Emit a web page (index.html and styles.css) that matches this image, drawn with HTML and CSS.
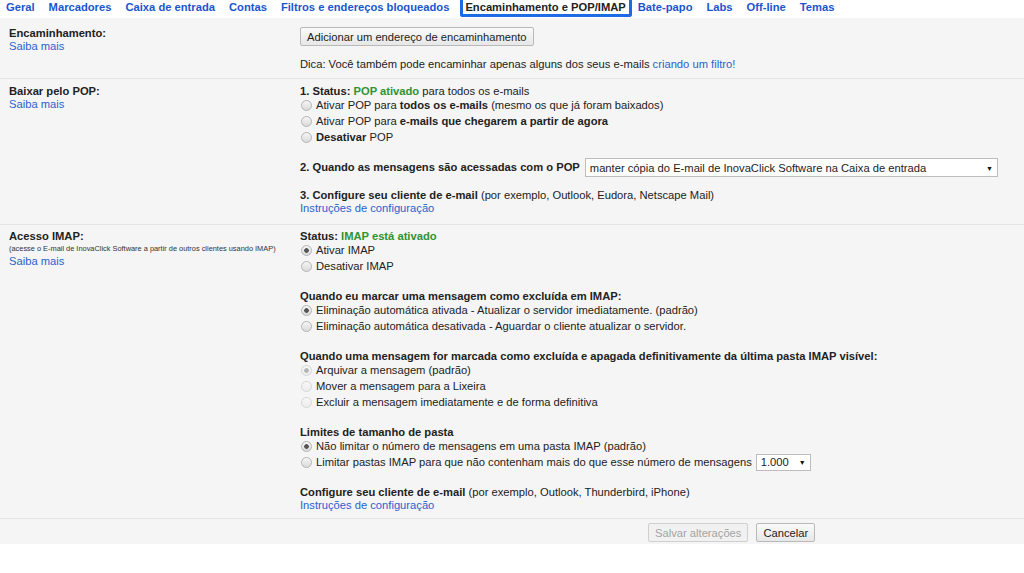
FILE: index.html
```html
<!DOCTYPE html>
<html lang="pt-BR">
<head>
    <meta charset="UTF-8">
    <meta name="viewport" content="width=device-width, initial-scale=1.0">
    <title>Configurações - Encaminhamento e POP/IMAP</title>
    <link rel="stylesheet" href="styles.css">
</head>
<body>
    <div class="tabs">
        <a class="tab" href="#">Geral</a>
        <a class="tab" href="#">Marcadores</a>
        <a class="tab" href="#">Caixa de entrada</a>
        <a class="tab" href="#">Contas</a>
        <a class="tab" href="#">Filtros e endereços bloqueados</a>
        <span class="tab tab-active">Encaminhamento e POP/IMAP</span>
        <a class="tab" href="#">Bate-papo</a>
        <a class="tab" href="#">Labs</a>
        <a class="tab" href="#">Off-line</a>
        <a class="tab" href="#">Temas</a>
    </div>

    <div class="settings">
        <div class="row row-forward">
            <div class="label">
                <b>Encaminhamento:</b>
                <a class="link" href="#">Saiba mais</a>
            </div>
            <div class="content">
                <div><button class="btn">Adicionar um endereço de encaminhamento</button></div>
                <div class="tip">Dica: Você também pode encaminhar apenas alguns dos seus e-mails <a class="link" href="#">criando um filtro!</a></div>
            </div>
        </div>

        <div class="row row-pop">
            <div class="label">
                <b>Baixar pelo POP:</b>
                <a class="link" href="#">Saiba mais</a>
            </div>
            <div class="content">
                <div class="line"><b>1. Status: <span class="on">POP ativado</span></b> para todos os e-mails</div>
                <label class="option"><input class="radio" type="radio" name="pop"><span>Ativar POP para <b>todos os e-mails</b> (mesmo os que já foram baixados)</span></label>
                <label class="option"><input class="radio" type="radio" name="pop"><span>Ativar POP para <b>e-mails que chegarem a partir de agora</b></span></label>
                <label class="option"><input class="radio" type="radio" name="pop"><span><b>Desativar</b> POP</span></label>

                <div class="line line-select">
                    <b>2. Quando as mensagens são acessadas com o POP</b>
                    <span class="select-wrap select-wide">
                        <select class="select">
                            <option>manter cópia do E-mail de InovaClick Software na Caixa de entrada</option>
                        </select>
                    </span>
                </div>

                <div class="line line-gap"><b>3. Configure seu cliente de e-mail</b> (por exemplo, Outlook, Eudora, Netscape Mail)</div>
                <a class="link" href="#">Instruções de configuração</a>
            </div>
        </div>

        <div class="row row-imap">
            <div class="label">
                <b>Acesso IMAP:</b>
                <span class="small">(acesse o E-mail de InovaClick Software a partir de outros clientes usando IMAP)</span>
                <a class="link" href="#">Saiba mais</a>
            </div>
            <div class="content">
                <div class="group">
                    <div class="line"><b>Status: <span class="on">IMAP está ativado</span></b></div>
                    <label class="option"><input class="radio" type="radio" name="imap" checked><span>Ativar IMAP</span></label>
                    <label class="option"><input class="radio" type="radio" name="imap"><span>Desativar IMAP</span></label>
                </div>

                <div class="group">
                    <div class="line"><b>Quando eu marcar uma mensagem como excluída em IMAP:</b></div>
                    <label class="option"><input class="radio" type="radio" name="expunge" checked><span>Eliminação automática ativada - Atualizar o servidor imediatamente. (padrão)</span></label>
                    <label class="option"><input class="radio" type="radio" name="expunge"><span>Eliminação automática desativada - Aguardar o cliente atualizar o servidor.</span></label>
                </div>

                <div class="group">
                    <div class="line"><b>Quando uma mensagem for marcada como excluída e apagada definitivamente da última pasta IMAP visível:</b></div>
                    <label class="option"><input class="radio" type="radio" name="deleted" checked disabled><span>Arquivar a mensagem (padrão)</span></label>
                    <label class="option"><input class="radio" type="radio" name="deleted" disabled><span>Mover a mensagem para a Lixeira</span></label>
                    <label class="option"><input class="radio" type="radio" name="deleted" disabled><span>Excluir a mensagem imediatamente e de forma definitiva</span></label>
                </div>

                <div class="group">
                    <div class="line"><b>Limites de tamanho de pasta</b></div>
                    <label class="option"><input class="radio" type="radio" name="limit" checked><span>Não limitar o número de mensagens em uma pasta IMAP (padrão)</span></label>
                    <label class="option"><input class="radio" type="radio" name="limit"><span>Limitar pastas IMAP para que não contenham mais do que esse número de mensagens</span>
                        <span class="select-wrap select-small">
                            <select class="select">
                                <option>1.000</option>
                            </select>
                        </span>
                    </label>
                </div>

                <div class="line"><b>Configure seu cliente de e-mail</b> (por exemplo, Outlook, Thunderbird, iPhone)</div>
                <a class="link" href="#">Instruções de configuração</a>
            </div>
        </div>

        <div class="actions">
            <button class="btn" disabled>Salvar alterações</button>
            <button class="btn">Cancelar</button>
        </div>
    </div>
</body>
</html>
```

FILE: styles.css
```css
body {
    margin: 0;
    background: #fff;
    color: #222;
    font-family: "Liberation Sans", Arial, sans-serif;
    font-size: 11.2px;
    line-height: 13px;
}

b {
    font-weight: bold;
}

.tabs {
    display: flex;
    align-items: flex-start;
    height: 18px;
    padding-left: 6px;
    background: #fff;
}

.tab {
    margin-right: 14px;
    line-height: 14px;
    color: #1a55cf;
    font-weight: bold;
    text-decoration: none;
}

.tab-active {
    margin-left: -3px;
    margin-right: 6px;
    height: 14px;
    padding: 0 3px 0 2px;
    border: 3px solid #1c6ae4;
    border-top: 0;
    border-radius: 0 0 3px 3px;
    color: #222;
    background: #fff;
}

.settings {
    background: #f5f5f5;
}

.row {
    display: grid;
    grid-template-columns: 300px 1fr;
    border-bottom: 1px solid #e4e4e4;
}

.label {
    display: flex;
    flex-direction: column;
    align-items: flex-start;
    padding-left: 9px;
}

.small {
    font-size: 7.4px;
    line-height: 12px;
    color: #333;
    white-space: nowrap;
}

.link {
    color: #2b5fce;
    text-decoration: none;
}

.on {
    color: #2f9331;
}

.row-forward {
    padding: 9px 0 7px;
}

.row-pop {
    padding: 6px 0 9px;
}

.row-imap {
    padding: 5px 0 6px;
}

.content {
    display: flex;
    flex-direction: column;
    align-items: flex-start;
}

.tip {
    margin-top: 12px;
}

.line {
    white-space: nowrap;
}

.line-select {
    display: flex;
    align-items: center;
    margin-top: 12px;
    height: 19px;
}

.line-gap {
    margin-top: 12px;
}

.group {
    display: flex;
    flex-direction: column;
    align-items: flex-start;
    margin-bottom: 15px;
}

.option {
    display: flex;
    align-items: center;
    height: 16px;
    margin-top: -1px;
    margin-bottom: 1px;
    white-space: nowrap;
}

.radio {
    appearance: none;
    -webkit-appearance: none;
    flex: none;
    width: 11px;
    height: 11px;
    margin: 0 4px 0 1px;
    border: 1px solid #b4b4b4;
    border-radius: 50%;
    background: linear-gradient(#f6f6f6, #dadada);
}

.radio:checked {
    background: radial-gradient(circle, #555 0 2px, transparent 2.6px), linear-gradient(#f6f6f6, #dadada);
}

.radio:disabled {
    border-color: #d6d6d6;
    background: linear-gradient(#f8f8f8, #ececec);
}

.radio:disabled:checked {
    background: radial-gradient(circle, #b5b5b5 0 2px, transparent 2.6px), linear-gradient(#f8f8f8, #ececec);
}

.btn {
    height: 19px;
    padding: 0 6px;
    border: 1px solid #b9b9b9;
    border-radius: 2px;
    background: linear-gradient(#fafafa, #e7e7e7);
    color: #222;
    font-family: inherit;
    font-size: 11.2px;
}

.btn:disabled {
    border-color: #cfcfcf;
    background: #f1f1f1;
    color: #a3a3a3;
}

.select-wrap {
    position: relative;
    display: inline-block;
}

.select-wrap::after {
    content: "▼";
    position: absolute;
    right: 5px;
    top: 50%;
    transform: translateY(-50%);
    font-size: 7px;
    color: #111;
    pointer-events: none;
}

.select {
    appearance: none;
    -webkit-appearance: none;
    height: 19px;
    padding: 0 4px;
    border: 1px solid #bdbdbd;
    border-radius: 0;
    background: #fff;
    color: #222;
    font-family: inherit;
    font-size: 11.2px;
}

.select-wide {
    margin-left: 5px;
}

.select-wide .select {
    width: 413px;
}

.select-small {
    margin-left: 4px;
}

.select-small .select {
    width: 55px;
    height: 17px;
}

.actions {
    display: flex;
    gap: 8px;
    padding: 4px 0 2px 648px;
}
```
